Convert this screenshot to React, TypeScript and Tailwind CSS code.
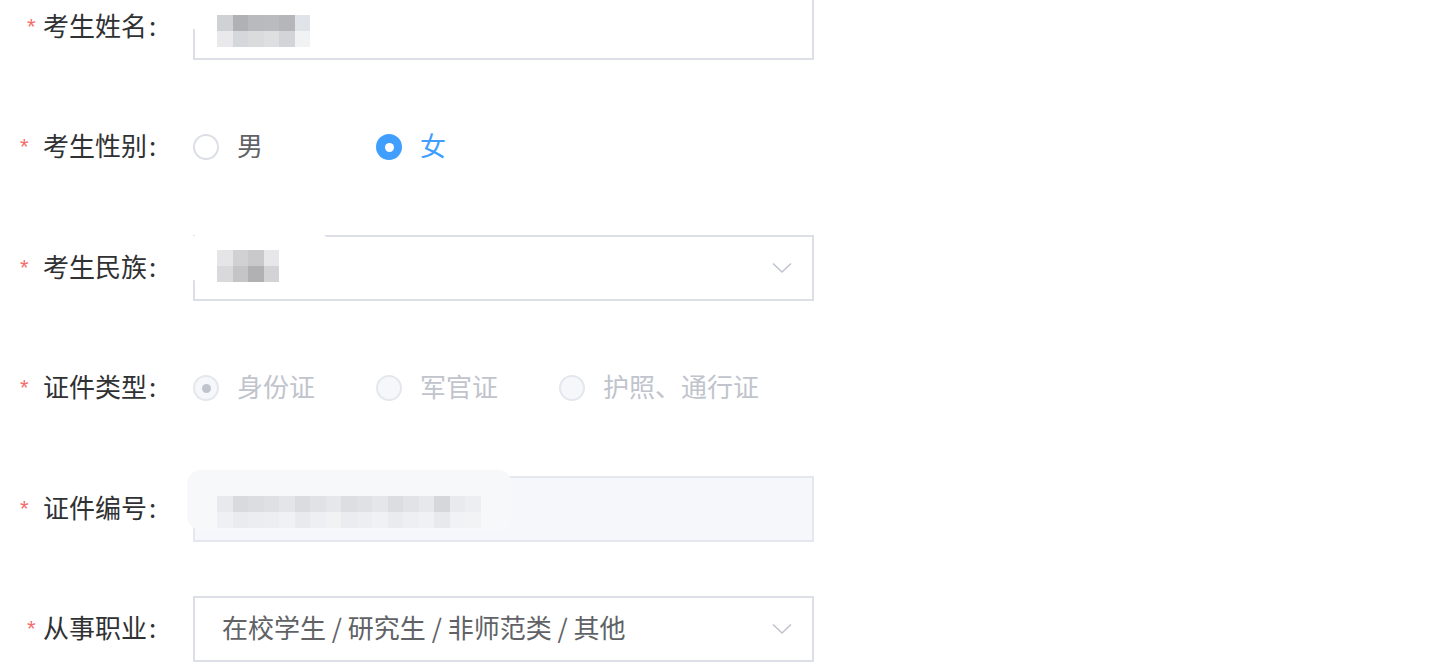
import React from "react";

const FONT = {
  fontFamily: '"Noto Sans CJK SC", "Noto Sans", sans-serif',
};

// masked (mosaic) text blocks, as in the screenshot
const NAME_MOSAIC = [
  ["#d0d1d4", "#afb1b5", "#b9babd", "#babbbe", "#b5b6b9", "#e0e3e8"],
  ["#e9e9eb", "#d6d7da", "#dadbdd", "#dedfe1", "#d3d4d7", "#f1f2f4"],
];
const NATION_MOSAIC = [
  ["#e5e5e7", "#d1d1d3", "#c9c9cb", "#e7e7e9"],
  ["#d9d9db", "#c5c5c7", "#b1b1b3", "#d3d3d5"],
];
const ID_MOSAIC = [
  [
    "#e8e9ec", "#d9dadd", "#dcdde0", "#dfe0e3", "#e4e5e8", "#dbdce0",
    "#e1e2e5", "#e6e7ea", "#dddee1", "#e0e1e4", "#e5e6e9", "#dcdde0",
    "#e2e3e6", "#e7e8eb", "#d6d7da", "#e9eaed", "#eceef1",
  ],
  [
    "#eff0f3", "#eaebee", "#ecedf0", "#edeef1", "#f0f1f4", "#e9eaed",
    "#eeeff2", "#f1f2f4", "#ebecef", "#edeef1", "#f0f1f3", "#eaebee",
    "#eeeff2", "#f0f1f3", "#e8e9ec", "#f1f2f4", "#f2f3f5",
  ],
];

function Mosaic({ cells, size }: { cells: string[][]; size: number }) {
  return (
    <div className="flex flex-col">
      {cells.map((row, i) => (
        <div key={i} className="flex">
          {row.map((c, j) => (
            <div
              key={j}
              style={{ width: size, height: 16, background: c }}
            />
          ))}
        </div>
      ))}
    </div>
  );
}

function Label({ text, star }: { text: string; star: number }) {
  return (
    <div className="w-[193px] shrink-0 flex items-center h-full">
      <div className="w-[43px] shrink-0 relative h-full">
        <span
          className="absolute top-[22px] text-[22px] leading-none text-[#f56c6c] font-['Liberation_Sans',sans-serif]"
          style={{ left: star }}
        >
          *
        </span>
      </div>
      <span className="relative top-[-2px] text-[26px] text-[#303133] leading-none whitespace-nowrap">
        {text}
        <span className="ml-[2px]">:</span>
      </span>
    </div>
  );
}

function Chevron() {
  return (
    <svg width="20" height="12" viewBox="0 0 20 12" fill="none">
      <path
        d="M1 1.5 L10 10 L19 1.5"
        stroke="#c0c4cc"
        strokeWidth="1.6"
        strokeLinejoin="round"
      />
    </svg>
  );
}

function Radio({
  label,
  checked,
  disabled,
}: {
  label: string;
  checked?: boolean;
  disabled?: boolean;
}) {
  let circle = "border-2 border-[#dcdfe6] bg-white";
  if (checked && !disabled) circle = "bg-[#409eff] border-2 border-[#409eff]";
  if (disabled) circle = "border-2 border-[#e4e7ed] bg-[#f5f7fa]";
  const text = disabled
    ? "text-[#c0c4cc]"
    : checked
      ? "text-[#409eff]"
      : "text-[#606266]";
  return (
    <div className="min-w-[183px] shrink-0 flex items-center">
      <div
        className={`w-[26px] h-[26px] rounded-full flex items-center justify-center ${circle}`}
      >
        {checked && (
          <div
            className={`w-[9px] h-[9px] rounded-full ${disabled ? "bg-[#c0c4cc]" : "bg-white"}`}
          />
        )}
      </div>
      <span
        className={`relative top-[-2px] ml-[18px] text-[26px] leading-none whitespace-nowrap ${text}`}
      >
        {label}
      </span>
    </div>
  );
}

function Row({ children }: { children: React.ReactNode }) {
  return (
    <div className="flex items-center h-[66px] mb-[54.4px]">{children}</div>
  );
}

export default function App() {
  return (
    <div className="w-[1440px] h-[662px] bg-white overflow-hidden" style={FONT}>
      <div className="mt-[-6px]">
        {/* name */}
        <Row>
          <Label text="考生姓名" star={27} />
          <div className="relative w-[621px] h-[66px] border-2 border-[#dcdfe6] bg-white">
            <div className="absolute left-[-10px] top-[-4px] w-[145px] h-[38px] rounded-[14px] bg-white" />
            <div className="absolute left-[22px] top-[19px]">
              <Mosaic cells={NAME_MOSAIC} size={15.5} />
            </div>
          </div>
        </Row>

        {/* gender */}
        <Row>
          <Label text="考生性别" star={20} />
          <Radio label="男" />
          <Radio label="女" checked />
        </Row>

        {/* nation */}
        <Row>
          <Label text="考生民族" star={20} />
          <div className="relative w-[621px] h-[66px] border-2 border-[#dcdfe6] bg-white flex items-center justify-end pr-[20px]">
            <div className="absolute left-[-8px] top-[-3px] w-[145px] h-[48px] rounded-[14px] bg-white" />
            <div className="absolute left-[22px] top-[13px]">
              <Mosaic cells={NATION_MOSAIC} size={15.5} />
            </div>
            <Chevron />
          </div>
        </Row>

        {/* id type */}
        <Row>
          <Label text="证件类型" star={20} />
          <Radio label="身份证" checked disabled />
          <Radio label="军官证" disabled />
          <Radio label="护照、通行证" disabled />
        </Row>

        {/* id number */}
        <Row>
          <Label text="证件编号" star={20} />
          <div className="relative w-[621px] h-[66px] border-2 border-[#e4e7ed] bg-[#f5f7fa]">
            <div className="absolute left-[-8px] top-[-8px] w-[325px] h-[60px] rounded-[14px] bg-[#f7f8fa]" />
            <div className="absolute left-[22px] top-[18px]">
              <Mosaic cells={ID_MOSAIC} size={15.5} />
            </div>
          </div>
        </Row>

        {/* job */}
        <Row>
          <Label text="从事职业" star={27} />
          <div className="w-[621px] h-[66px] border-2 border-[#dcdfe6] bg-white flex items-center justify-between pl-[27px] pr-[20px]">
            <span className="relative top-[-2px] text-[26px] text-[#606266] leading-none whitespace-nowrap">
              在校学生 / 研究生 / 非师范类 / 其他
            </span>
            <Chevron />
          </div>
        </Row>
      </div>
    </div>
  );
}
